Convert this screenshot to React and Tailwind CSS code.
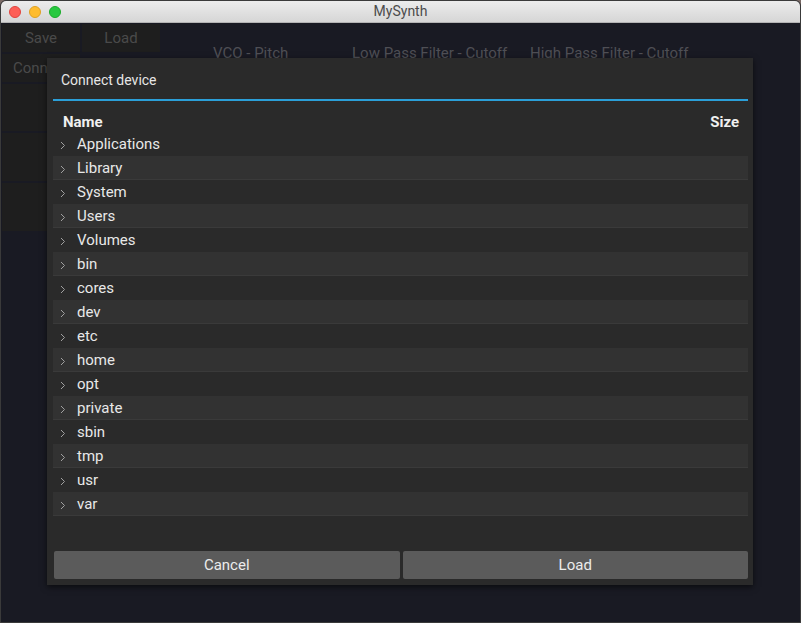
const folders = [
  'Applications', 'Library', 'System', 'Users', 'Volumes', 'bin', 'cores', 'dev',
  'etc', 'home', 'opt', 'private', 'sbin', 'tmp', 'usr', 'var',
]

function Chevron() {
  return (
    <svg width="6" height="9" viewBox="0 0 6 9" className="shrink-0">
      <path d="M1 1 L4.5 4.5 L1 8" fill="none" stroke="#a0a0a0" strokeWidth="1" />
    </svg>
  )
}

export default function App() {
  return (
    <div
      className="relative w-[801px] h-[623px] overflow-hidden bg-[#7a6a66]"
      style={{ fontFamily: 'Roboto, "Noto Sans", sans-serif' }}
    >
      <div className="absolute inset-0 flex flex-col rounded-t-[6px] overflow-hidden border border-[#3a3a3a] bg-[#191a23]">
        {/* title bar */}
        <div className="relative h-[22px] shrink-0 flex items-center justify-center bg-gradient-to-b from-[#ececec] to-[#d6d6d6] border-b border-[#b4b4b4]">
          <div className="absolute left-[8px] top-[5px] flex gap-[8px]">
            <div className="w-[12px] h-[12px] rounded-full bg-[#fd5f57] border border-[#e0443e]" />
            <div className="w-[12px] h-[12px] rounded-full bg-[#febc2e] border border-[#dea123]" />
            <div className="w-[12px] h-[12px] rounded-full bg-[#28c840] border border-[#1aab29]" />
          </div>
          <span className="text-[14px] text-[#4c4c4c]">MySynth</span>
        </div>

        {/* app content */}
        <div className="flex-1 flex pt-[1px] pl-[1px]">
          <div className="flex flex-col gap-[2px] w-[159px]">
            <div className="flex gap-[2px]">
              <div className="w-[78px] h-[28px] bg-[#1e1e1e] flex items-center justify-center text-[15px] text-[#4a4a4a]">Save</div>
              <div className="w-[78px] h-[28px] bg-[#1e1e1e] flex items-center justify-center text-[15px] text-[#4a4a4a]">Load</div>
            </div>
            <div className="w-[78px] h-[28px] bg-[#1e1e1e] flex items-center pl-[11px] text-[15px] text-[#4a4a4a]">Connect</div>
            <div className="w-[78px] h-[47px] bg-[#1e1e1e]" />
            <div className="w-[78px] h-[48px] bg-[#1e1e1e]" />
            <div className="w-[78px] h-[48px] bg-[#1e1e1e]" />
          </div>
          <div className="flex pt-[18px] pl-[52px] text-[15px] text-[#4f4f55]">
            <span className="w-[139px]">VCO - Pitch</span>
            <span className="w-[178px]">Low Pass Filter - Cutoff</span>
            <span>High Pass Filter - Cutoff</span>
          </div>
        </div>
      </div>

      {/* modal dialog */}
      <div className="absolute left-[47px] top-[58px] w-[706px] h-[527px] bg-[#2a2a2a] shadow-[0_2px_6px_rgba(0,0,0,0.6)] flex flex-col pl-[6px] pr-[5px]">
        <div className="h-[41px] flex items-center pl-[8px] pt-[4px] text-[14px] text-[#e6e6e6]">Connect device</div>
        <div className="h-[2px] bg-[#2b9fd8]" />
        <div className="mt-[11px] h-[20px] flex items-center justify-between pl-[10px] pr-[9px] text-[15px] font-bold text-[#f0f0f0]">
          <span>Name</span>
          <span>Size</span>
        </div>
        <div className="flex flex-col">
          {folders.map((f, i) => (
            <div
              key={f}
              className={
                i % 2 === 1
                  ? 'h-[24px] flex items-center gap-[11px] pl-[7px] bg-[#323232] shadow-[inset_0_-1px_0_#3a3a3a] text-[15px] text-[#e8e8e8]'
                  : 'h-[24px] flex items-center gap-[11px] pl-[7px] text-[15px] text-[#e8e8e8]'
              }
            >
              <div className="mt-[3px]"><Chevron /></div>
              <span>{f}</span>
            </div>
          ))}
        </div>
        <div className="mt-auto mb-[6px] flex gap-[3px] pl-[1px]">
          <button className="flex-1 h-[28px] bg-[#5b5b5b] rounded-[2px] text-[15px] text-[#ececec]">Cancel</button>
          <button className="flex-1 h-[28px] bg-[#5b5b5b] rounded-[2px] text-[15px] text-[#ececec]">Load</button>
        </div>
      </div>
    </div>
  )
}
